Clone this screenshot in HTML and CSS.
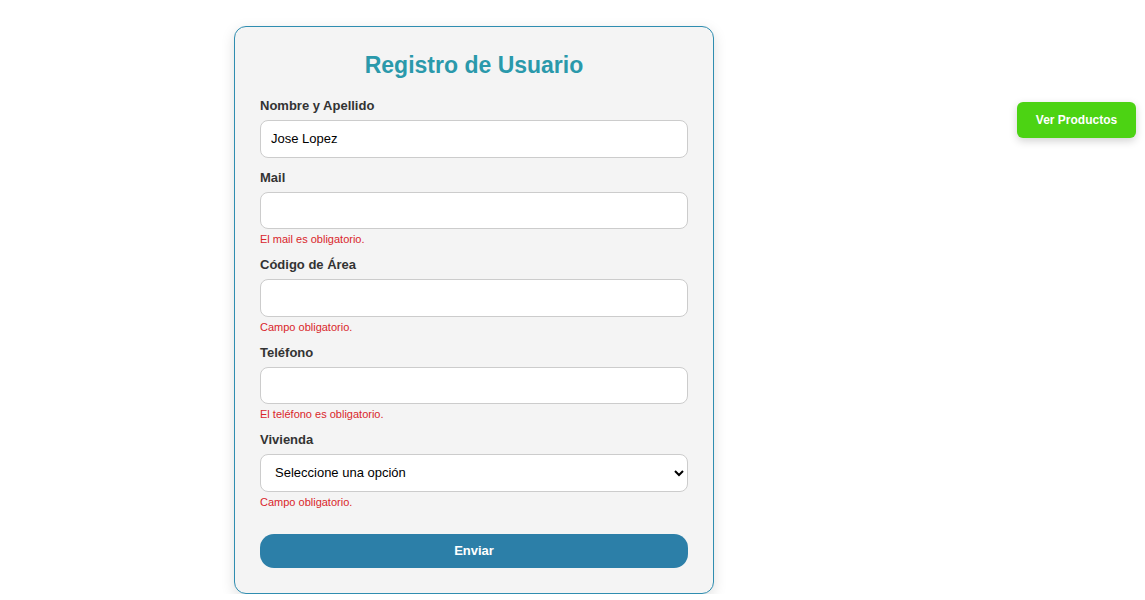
FILE: index.html
```html
<!DOCTYPE html>
<html lang="es">
<head>
<meta charset="utf-8">
<title>Registro de Usuario</title>
<link rel="stylesheet" href="styles.css">
</head>
<body>
<div class="page">
  <form class="card">
    <h2 class="title">Registro de Usuario</h2>
    <div class="field">
      <label class="label" for="nombre">Nombre y Apellido</label>
      <input class="input" id="nombre" type="text" value="Jose Lopez">
    </div>
    <div class="field">
      <label class="label" for="mail">Mail</label>
      <input class="input" id="mail" type="text">
      <p class="error">El mail es obligatorio.</p>
    </div>
    <div class="field">
      <label class="label" for="area">Código de Área</label>
      <input class="input" id="area" type="text">
      <p class="error">Campo obligatorio.</p>
    </div>
    <div class="field">
      <label class="label" for="tel">Teléfono</label>
      <input class="input" id="tel" type="text">
      <p class="error">El teléfono es obligatorio.</p>
    </div>
    <div class="field">
      <label class="label" for="viv">Vivienda</label>
      <select class="select" id="viv">
        <option>Seleccione una opción</option>
      </select>
      <p class="error">Campo obligatorio.</p>
    </div>
    <button class="submit" type="button">Enviar</button>
  </form>
  <button class="products" type="button">Ver Productos</button>
</div>
</body>
</html>
```
FILE: styles.css
```css
* { box-sizing: border-box; }
html, body { margin: 0; padding: 0; background: #fff; }
body { font-family: "Liberation Sans", Arial, sans-serif; }

.page {
  display: flex;
  justify-content: space-between;
  align-items: flex-start;
  padding: 26px 9px 0 234px;
}

.card {
  width: 480px;
  background: #f4f4f4;
  border: 1px solid #2f8db0;
  border-radius: 12px;
  padding: 25px;
  box-shadow: 0 4px 14px rgba(0, 0, 0, 0.13);
}

.title {
  margin: 0 0 20px;
  text-align: center;
  font-size: 23px;
  line-height: 26px;
  font-weight: bold;
  color: #2a99ab;
}

.field { margin-bottom: 12px; }

.label {
  display: block;
  margin-bottom: 7px;
  font-size: 13px;
  line-height: 15px;
  font-weight: bold;
  color: #333;
}

.input, .select {
  display: block;
  width: 100%;
  height: 37.5px;
  padding: 0 10px;
  border: 1px solid #ccc;
  border-radius: 8px;
  background: #fff;
  font-family: "Liberation Sans", Arial, sans-serif;
  font-size: 13px;
  color: #000;
}

.error {
  margin: 4px 0 0;
  font-size: 11px;
  line-height: 12px;
  color: #d9262b;
}

.submit {
  display: block;
  width: 100%;
  height: 34px;
  margin-top: 26px;
  border: none;
  border-radius: 14px;
  background: #2c7fa8;
  color: #fff;
  font-family: "Liberation Sans", Arial, sans-serif;
  font-size: 13px;
  font-weight: bold;
}

.products {
  margin-top: 76px;
  width: 119px;
  height: 36px;
  border: none;
  border-radius: 6px;
  background: #4cd313;
  color: #fff;
  font-family: "Liberation Sans", Arial, sans-serif;
  font-size: 12px;
  font-weight: bold;
  box-shadow: 0 3px 8px rgba(0, 0, 0, 0.18);
}
```
